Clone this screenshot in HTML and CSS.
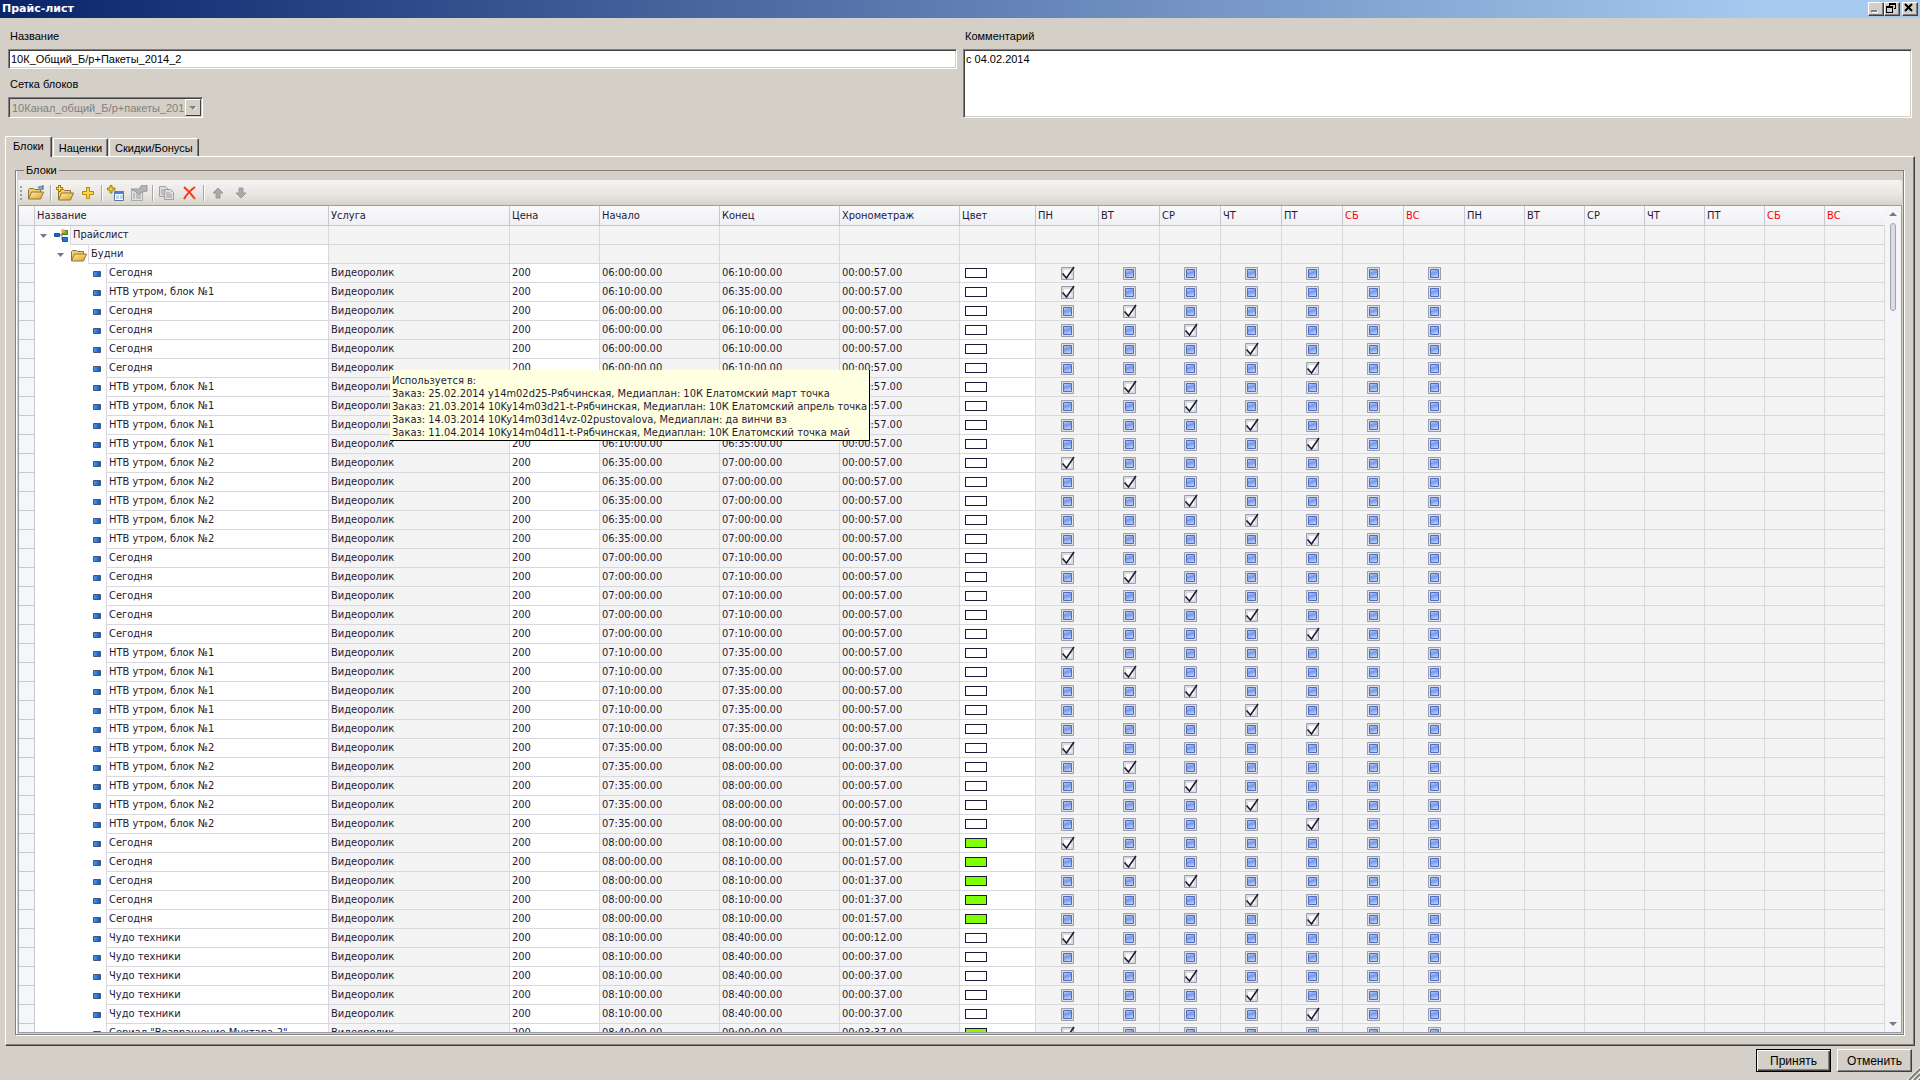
FILE: index.html
```html
<!DOCTYPE html>
<html lang="ru">
<head>
<meta charset="utf-8">
<title>Прайс-лист</title>
<link rel="stylesheet" href="styles.css">
</head>
<body>
<header class="titlebar">
  <h1 class="titlebar-text">Прайс-лист</h1>
  <button class="win-btn" aria-label="Свернуть"><svg width="12" height="10"><path d="M3 9h6" stroke="#fff" stroke-width="2"/><path d="M2 8h6" stroke="#808080" stroke-width="2"/></svg></button>
  <button class="win-btn" aria-label="Восстановить"><svg width="12" height="10" shape-rendering="crispEdges"><path d="M4 0h7v2h-7zM4 2h1v1h-1zM10 2h1v4h-2v-1h1zM1 3h7v2h-7zM1 5h1v4h5v-4h1v5h-7z"/></svg></button>
  <button class="win-btn win-close" aria-label="Закрыть"><svg width="12" height="10"><path d="M2 1l7 7M9 1l-7 7" stroke="#000" stroke-width="2"/></svg></button>
</header>

<form class="fields">
  <div class="field-col">
    <label class="label" for="name">Название</label>
    <input class="box text-input" id="name" type="text" value="10К_Общий_Б/р+Пакеты_2014_2">
    <label class="label" for="blockset">Сетка блоков</label>
    <div class="select-wrap">
      <select class="box select" id="blockset" disabled><option>10Канал_общий_Б/р+пакеты_201</option></select>
      <span class="select-arrow"><svg width="8" height="4"><path d="M1 1h7l-4 4z" fill="#fff"/><path d="M0 0h7l-3 4z" fill="#808080"/></svg></span>
    </div>
  </div>
  <div class="field-col">
    <label class="label" for="comment">Комментарий</label>
    <textarea class="box comment" id="comment">с 04.02.2014</textarea>
  </div>
</form>

<nav class="tabs" role="tablist">
  <button class="tab tab-active" role="tab" aria-selected="true">Блоки</button>
  <button class="tab" role="tab" aria-selected="false">Наценки</button>
  <button class="tab" role="tab" aria-selected="false">Скидки/Бонусы</button>
</nav>

<main class="panel">
  <fieldset class="group">
    <legend class="legend">Блоки</legend>
    <div class="group-body">
      <div class="toolbar" role="toolbar">
        <span class="grip"></span>
        <button class="tool" aria-label="Открыть"><svg width="18" height="16"><use href="#i-folder" y="1"/><path d="M10 3q3-3 5 0M15 0v4h-4" fill="none" stroke="#5f7fae" stroke-width="1.4"/></svg></button>
        <span class="sep"></span>
        <button class="tool" aria-label="Новая папка"><svg width="18" height="16"><use href="#i-folder" x="2" y="2"/><path d="M3.500 0v7M0 3.500h7" stroke="#a87808" stroke-width="3"/><path d="M3.500 1v5M1 3.500h5" stroke="#ffe06a"/></svg></button>
        <button class="tool" aria-label="Добавить"><svg width="16" height="16"><path d="M6.500 2.500h3v4h4v3h-4v4h-3v-4h-4v-3h4z" fill="#fbd34a" stroke="#b8860b"/></svg></button>
        <span class="sep"></span>
        <button class="tool" aria-label="Добавить таблицу"><svg width="18" height="16"><path d="M3 .5h2v2.500h3v2h-3v3h-2v-3h-2.500v-2h2.500z" fill="#eed53a" stroke="#9a8208"/><path d="M7.500 6.500h9v9h-9z" fill="#fff" stroke="#5474b0"/><path d="M7 6h10v3h-10z" fill="#4f7fd8"/><path d="M9 11h3M13 11h3M9 13h3M13 13h3" stroke="#86a5dc"/></svg></button>
        <button class="tool" aria-label="Свойства" disabled><svg width="18" height="16"><path d="M1.500 5.500h11v10h-11z" fill="#e3e3e3" stroke="#aaa"/><path d="M1 4h8l3-4h5v6l-5 1-3 2z" fill="#b4b4b4" stroke="#999"/><path d="M3 9h2M6 9h5M3 11h2M6 11h5M3 13h2M6 13h5" stroke="#999"/></svg></button>
        <span class="sep"></span>
        <button class="tool" aria-label="Копировать" disabled><svg width="18" height="16"><path d="M1.500 1.500h6l3 3v7h-9z" fill="#ddd" stroke="#a0a0a0"/><path d="M6.500 4.500h6l3 3v7h-9z" fill="#ddd" stroke="#a0a0a0"/><path d="M3 5h4M3 7h3M3 9h3M8 8h4M8 10h6M8 12h6" stroke="#a0a0a0"/></svg></button>
        <button class="tool" aria-label="Удалить"><svg width="16" height="16"><path d="M2 2q6 5 11 12M13 2q-7 5-11 12" fill="none" stroke="#f23a20" stroke-width="2"/></svg></button>
        <span class="sep"></span>
        <button class="tool" aria-label="Вверх" disabled><svg width="16" height="16"><path d="M8 3l5 5h-3v5h-4v-5h-3z" fill="#aaa" stroke="#999"/></svg></button>
        <button class="tool" aria-label="Вниз" disabled><svg width="16" height="16"><path d="M8 13l5-5h-3v-5h-4v5h-3z" fill="#aaa" stroke="#999"/></svg></button>
      </div>

      <div class="grid">
        <div class="grid-view">
          <table class="table">
            <colgroup>
              <col class="c-mark"><col class="c-name"><col class="c-service"><col class="c-price">
              <col class="c-time" span="3"><col class="c-color"><col class="c-first"><col class="c-day" span="6"><col class="c-next" span="7">
            </colgroup>
            <thead>
              <tr>
                <th></th><th>Название</th><th>Услуга</th><th>Цена</th><th>Начало</th><th>Конец</th><th>Хронометраж</th><th>Цвет</th>
                <th>ПН</th><th>ВТ</th><th>СР</th><th>ЧТ</th><th>ПТ</th><th class="weekend">СБ</th><th class="weekend">ВС</th>
                <th>ПН</th><th>ВТ</th><th>СР</th><th>ЧТ</th><th>ПТ</th><th class="weekend">СБ</th><th class="weekend">ВС</th>
              </tr>
            </thead>
            <tbody id="rows"></tbody>
          </table>
        </div>
        <div class="scrollbar">
          <svg width="8" height="4"><path d="M0 4l4-4 4 4z" fill="#77798a"/></svg>
          <span class="thumb"></span>
          <svg class="scroll-down" width="8" height="4"><path d="M0 0h8l-4 4z" fill="#77798a"/></svg>
        </div>
        <div class="tooltip" role="tooltip">Используется в:<br>Заказ: 25.02.2014 y14m02d25-Рябчинская, Медиаплан: 10К Елатомский март точка<br>Заказ: 21.03.2014 10Ky14m03d21-t-Рябчинская, Медиаплан: 10К Елатомский апрель точка<br>Заказ: 14.03.2014 10Ky14m03d14vz-02pustovalova, Медиаплан: да винчи вз<br>Заказ: 11.04.2014 10Ky14m04d11-t-Рябчинская, Медиаплан: 10К Елатомский точка май</div>
      </div>
    </div>
  </fieldset>
</main>

<footer class="footer">
  <button class="btn btn-default">Принять</button>
  <button class="btn">Отменить</button>
  <svg class="resize" width="13" height="13"><path d="M0 13L13 0M5 13l8-8M10 13l3-3" stroke="#fff"/><path d="M2 13L13 2M7 13l6-6M12 13l1-1" stroke="#808080" stroke-width="2"/></svg>
</footer>

<svg class="defs" width="0" height="0" aria-hidden="true">
  <defs>
    <linearGradient id="gold" x1="0" y1="0" x2="1" y2="1"><stop offset="0" stop-color="#fff0a8"/><stop offset="1" stop-color="#dfa027"/></linearGradient>
    <linearGradient id="blue" x1="0" y1="0" x2="1" y2="0"><stop offset="0" stop-color="#3fa0f4"/><stop offset="1" stop-color="#0754c8"/></linearGradient>
    <g id="i-folder"><path d="M.5 12.500v-9l1-1h4l1 1h6v3" fill="#f0cf70" stroke="#94733a"/><path d="M.5 13l3-7h12l-3 7z" fill="url(#gold)" stroke="#94733a"/></g>
    <g id="i-leaf"><path d="M.5 .5h7v5h-7z" fill="url(#blue)" stroke="#4b5370"/></g>
    <g id="i-root"><path d="M5 6h3v5h2M8 6V4h2" fill="none" stroke="#777"/><path d="M.5 4.500h5v3h-5z" fill="#1267d8" stroke="#2a4f90"/><path d="M8.500 1.500h5v4h-5z" fill="#5cb83c" stroke="#3f8030"/><path d="M8.500 8.500h5v4h-5z" fill="#1f77e2" stroke="#2a4f90"/><circle cx="9" cy="2" r="2" fill="#f5a83c"/></g>
    <g id="i-arrow"><path d="M0 0h7l-3.500 4z" fill="#74767f"/></g>
  </defs>
</svg>
<script src="rows.js"></script>
</body>
</html>
```
FILE: styles.css
```css
* { box-sizing: border-box; }

body {
  margin: 0;
  height: 100vh;
  display: flex;
  flex-direction: column;
  background: #d4d0c8;
  color: #000;
  font: 11px/14px "Liberation Sans", Arial, sans-serif;
  overflow: hidden;
}

button, input, select, textarea { font: inherit; color: inherit; border-radius: 0; }
button { padding: 0; }
.defs { position: absolute; }

/* Title bar */
.titlebar {
  flex: none;
  display: flex;
  align-items: center;
  height: 18px;
  padding: 0 2px;
  background: linear-gradient(90deg, #0a246a, #a6caf0 92%);
}
.titlebar-text {
  flex: 1;
  margin: 0;
  color: #fff;
  font: bold 11px/14px "DejaVu Sans", sans-serif;
}
.win-btn {
  display: flex;
  width: 16px;
  height: 14px;
  background: #d4d0c8;
  border: 1px solid;
  border-color: #fff #404040 #404040 #fff;
  box-shadow: inset -1px -1px #808080;
}
.win-close { margin-left: 2px; }

/* Fields */
.fields {
  flex: none;
  display: grid;
  grid-template-columns: 1fr 1fr;
  gap: 6px;
  margin: 0;
  padding: 11px 8px 18px;
}
.field-col { display: flex; flex-direction: column; }
.label { height: 20px; padding-left: 2px; }
.box {
  border: 1px solid;
  border-color: #808080 #fff #fff #808080;
  box-shadow: inset 1px 1px #404040, inset -1px -1px #d4d0c8;
  background: #fff;
  outline: none;
}
.text-input { height: 20px; margin-bottom: 8px; padding: 0 2px; }
.comment { flex: 1; padding: 2px; resize: none; }
.select-wrap { display: flex; position: relative; width: 195px; }
.select {
  appearance: none;
  width: 100%;
  height: 21px;
  padding: 0 16px 0 3px;
  background: #d4d0c8;
  color: #808080;
  opacity: 1;
}
.select-arrow {
  position: absolute;
  top: 2px;
  right: 2px;
  display: grid;
  place-items: center;
  width: 16px;
  height: 17px;
  background: #d4d0c8;
  border: 1px solid;
  border-color: #fff #404040 #404040 #fff;
}

/* Tabs */
.tabs { flex: none; display: flex; align-items: flex-end; gap: 1px; padding-left: 5px; }
.tab {
  height: 18px;
  padding: 0 5px;
  background: #d4d0c8;
  border: 1px solid;
  border-color: #fff #404040 transparent #fff;
  border-bottom: 0;
  border-radius: 2px 2px 0 0;
  box-shadow: inset -1px 0 #808080;
}
.tab-active { z-index: 1; height: 21px; margin-bottom: -1px; padding: 0 7px 2px; }

/* Panel and group */
.panel {
  flex: 1;
  min-height: 0;
  display: flex;
  margin: 0 5px;
  padding: 6px 10px 10px 9px;
  border: 1px solid;
  border-color: #fff #404040 #404040 #fff;
  box-shadow: inset -1px -1px #808080;
}
.group {
  flex: 1;
  min-width: 0;
  min-height: 0;
  margin: 0;
  padding: 0;
  border: 1px solid #808080;
  box-shadow: 1px 1px #fff, inset 1px 0 #fff;
}
.legend { height: 14px; margin-left: 8px; padding: 0 2px; }
.group-body { display: flex; flex-direction: column; height: 100%; padding: 3px 1px 1px 2px; }

/* Toolbar */
.toolbar {
  flex: none;
  display: flex;
  align-items: center;
  gap: 3px;
  height: 25px;
  padding: 0 2px;
  background: linear-gradient(#f5f4f2, #e6e5e0 60%, #d6d3c8);
  border-radius: 0 3px 3px 0;
}
.tool { display: grid; place-items: center; width: 20px; height: 20px; background: none; border: 0; }
.sep { width: 2px; height: 16px; background: #a6a6a6; border-right: 1px solid #fff; }
.grip { width: 2px; height: 14px; margin-right: 2px; background: repeating-linear-gradient(#a0a09c 0 2px, transparent 2px 4px); }

/* Grid */
.grid {
  flex: 1;
  min-height: 0;
  position: relative;
  display: flex;
  border: 1px solid #9a9ca8;
  background: #fff;
  color: #1e1a38;
  font: 11px/14px "DejaVu Sans Condensed", "DejaVu Sans", sans-serif;
}
.grid-view { flex: 1; min-width: 0; overflow: hidden; }
.table { width: 100%; table-layout: fixed; border-collapse: separate; border-spacing: 0; }
.c-mark { width: 16px; }
.c-name { width: 294px; }
.c-service { width: 181px; }
.c-price { width: 90px; }
.c-time { width: 120px; }
.c-color { width: 76px; }
.c-first { width: 63px; }
.c-day { width: 61px; }
.c-next { width: 60px; }

.table th {
  height: 20px;
  padding: 0 2px;
  text-align: left;
  font-weight: normal;
  background: linear-gradient(#fafafb, #eff0f4);
  border: 0 solid #c6c8d0;
  border-width: 0 1px 1px 0;
  white-space: nowrap;
}
.table th:last-child { border-right-color: transparent; }
.table .weekend { color: #f00; }
.table td {
  height: 19px;
  padding: 0 2px;
  background: #f4f4f4;
  border: 0 solid #d8d8de;
  border-width: 0 1px 1px 0;
  white-space: nowrap;
}
.table .mark { background: #f5f6f9; border-color: #c6c8d0; }
.table .editable { background: #fff; }
.table .tree { padding: 0; background: #fff; border-bottom: 0; }
.table .check { padding: 0; }

.node { display: flex; align-items: center; height: 19px; }
.node-icons { display: flex; align-items: center; justify-content: flex-end; gap: 7px; flex: none; }
.level-0 .node-icons { width: 35px; }
.level-1 .node-icons { width: 53px; }
.level-2 .node-icons { width: 71px; padding-right: 5px; }
.node-text { flex: 1; height: 19px; padding: 2px; border: 0 solid #d8d8de; border-width: 0 0 1px 1px; }
.level-0 .node-text { background: #f4f4f4; }

.swatch { display: block; width: 22px; height: 10px; margin-left: 3px; border: 1px solid #1e1a38; background: #fff; }
.swatch-green { background: #80ff00; }

.tick {
  appearance: none;
  display: block;
  width: 15px;
  height: 15px;
  margin: 0 auto;
  background: url("data:image/svg+xml,%3Csvg xmlns='http://www.w3.org/2000/svg' width='15' height='15'%3E%3Cpath d='M1.500 1.500h12v12h-12z' fill='%23dcdde2' stroke='%239a9ca8'/%3E%3Cpath d='M4 4h7v7h-7z' fill='%23fff'/%3E%3Cpath d='M2.500 7.500l4 4.500L14 1' fill='none' stroke='%231e1a38' stroke-width='1.600'/%3E%3C/svg%3E");
}
.tick:indeterminate {
  background: url("data:image/svg+xml,%3Csvg xmlns='http://www.w3.org/2000/svg' width='15' height='15'%3E%3ClinearGradient id='g' x1='0' y1='0' x2='.3' y2='1'%3E%3Cstop stop-color='%23c2d6ff'/%3E%3Cstop offset='.5' stop-color='%237898e4'/%3E%3Cstop offset='1' stop-color='%23b4ccff'/%3E%3C/linearGradient%3E%3Cpath d='M1.500 1.500h12v12h-12z' fill='%23dfe0e4' stroke='%239a9ca8'/%3E%3Cpath d='M3.500 3.500h8v8h-8z' fill='url(%23g)' stroke='%234c6cc8'/%3E%3C/svg%3E");
}

.scrollbar {
  flex: none;
  display: flex;
  flex-direction: column;
  align-items: center;
  gap: 7px;
  width: 16px;
  padding: 6px 0;
  background: #f5f5f8;
}
.thumb { width: 6px; height: 88px; border: 1px solid #a2a4b0; border-radius: 3px; background: #dcdde4; }
.scroll-down { margin-top: auto; }

.tooltip {
  position: absolute;
  top: 164px;
  left: 371px;
  padding: 4px 2px 1px;
  background: #ffffe1;
  border: 0 solid #000;
  border-width: 0 1px 1px 0;
  line-height: 13px;
  white-space: nowrap;
}

/* Footer */
.footer { flex: none; position: relative; display: flex; justify-content: flex-end; gap: 6px; padding: 3px 8px 8px; }
.btn {
  width: 75px;
  height: 23px;
  background: #d4d0c8;
  border: 1px solid;
  border-color: #fff #404040 #404040 #fff;
  box-shadow: inset -1px -1px #808080;
  font-size: 12px;
}
.btn-default { border-color: #000; box-shadow: inset 1px 1px #fff, inset -1px -1px #404040, inset -2px -2px #808080; }
.resize { position: absolute; right: 0; bottom: 0; }
```
FILE: rows.js
```js
const DAYS = ["ПН", "ВТ", "СР", "ЧТ", "ПТ", "СБ", "ВС"];
const N1 = "НТВ утром, блок №1";
const N2 = "НТВ утром, блок №2";

// [name, start, end, green, [[day, duration], ...]]
const same = (d, from = 0, to = 4) => DAYS.slice(from, to + 1).map((_, i) => [from + i, d]);
const groups = [
  ["Сегодня", "06:00", "06:10", false, same("00:57", 0, 0)],
  [N1, "06:10", "06:35", false, same("00:57", 0, 0)],
  ["Сегодня", "06:00", "06:10", false, same("00:57", 1)],
  [N1, "06:10", "06:35", false, same("00:57", 1)],
  [N2, "06:35", "07:00", false, same("00:57")],
  ["Сегодня", "07:00", "07:10", false, same("00:57")],
  [N1, "07:10", "07:35", false, same("00:57")],
  [N2, "07:35", "08:00", false, [[0, "00:37"], [1, "00:37"], [2, "00:57"], [3, "00:57"], [4, "00:57"]]],
  ["Сегодня", "08:00", "08:10", true, [[0, "01:57"], [1, "01:57"], [2, "01:37"], [3, "01:37"], [4, "01:57"]]],
  ["Чудо техники", "08:10", "08:40", false, [[0, "00:12"], [1, "00:37"], [2, "00:37"], [3, "00:37"], [4, "00:37"]]],
  ["Сериал \"Возвращение Мухтара-2\"", "08:40", "09:00", true, [[0, "03:37"]]],
];

const icon = (id, w, h) => `<svg width="${w}" height="${h}"><use href="#${id}"/></svg>`;
const node = (level, icons, text) =>
  `<td class="mark"></td><td class="tree"><div class="node level-${level}"><span class="node-icons">${icons}</span><span class="node-text">${text}</span></div></td>`;
const empty = (n) => "<td></td>".repeat(n);

let html = `<tr>${node(0, icon("i-arrow", 7, 4) + icon("i-root", 16, 14), "Прайслист")}${empty(20)}</tr>`;
html += `<tr>${node(1, icon("i-arrow", 7, 4) + icon("i-folder", 17, 14), "Будни")}${empty(20)}</tr>`;

for (const [name, start, end, green, items] of groups) {
  for (const [day, duration] of items) {
    const checks = DAYS.map((d, i) =>
      `<td class="check"><input class="tick" type="checkbox" aria-label="${d}"${i === day ? " checked" : ""}></td>`).join("");
    html += `<tr>${node(2, icon("i-leaf", 8, 6), name)}<td>Видеоролик</td><td class="editable">200</td>` +
      `<td>${start}:00.00</td><td>${end}:00.00</td><td>00:${duration}.00</td>` +
      `<td class="editable"><span class="swatch${green ? " swatch-green" : ""}"></span></td>${checks}${empty(7)}</tr>`;
  }
}

document.getElementById("rows").innerHTML = html;
document.querySelectorAll(".tick:not(:checked)").forEach((box) => { box.indeterminate = true; });
```
